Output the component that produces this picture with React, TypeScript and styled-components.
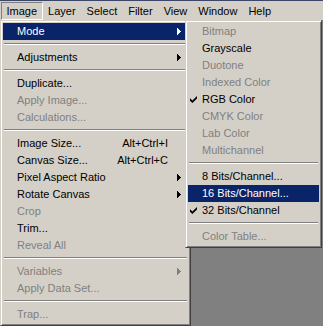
import React from "react";
import styled, { createGlobalStyle, css } from "styled-components";

const GlobalStyle = createGlobalStyle`
  html, body { margin: 0; padding: 0; background: #808080; }
  body { font-family: "Liberation Sans", Arial, sans-serif; font-size: 11px; }
`;

const Frame = styled.div`
  width: 323px;
  height: 326px;
  overflow: hidden;
  display: flex;
  flex-direction: column;
  background: #808080;
`;

const MenuBar = styled.div`
  box-sizing: border-box;
  height: 21px;
  border-top: 1px solid #3c4668;
  background: #d4d0c8;
  display: flex;
  align-items: center;
  padding-left: 1px;
`;

const BarItem = styled.div<{ $pressed?: boolean }>`
  box-sizing: border-box;
  height: 18px;
  line-height: 16px;
  padding: 0 4.5px;
  border: 1px solid transparent;
  color: #000;
  white-space: nowrap;
  ${(p) =>
    p.$pressed &&
    css`
      border-color: #808080 #ffffff #ffffff #808080;
    `}
`;

const Workspace = styled.div`
  position: relative;
  flex: 1;
  display: flex;
  align-items: flex-start;
`;

const Menu = styled.div<{ $width: number }>`
  box-sizing: border-box;
  width: ${(p) => p.$width}px;
  background: #d4d0c8;
  border: 1px solid;
  border-color: #d4d0c8 #404040 #404040 #d4d0c8;
  box-shadow: inset 1px 1px 0 #ffffff, inset -1px -1px 0 #808080;
  padding: 2px;
  display: flex;
  flex-direction: column;
`;

const SubMenu = styled(Menu)`
  position: absolute;
  left: 185px;
  top: 0;
`;

const Row = styled.div<{ $active?: boolean; $disabled?: boolean }>`
  display: flex;
  align-items: center;
  height: 17px;
  line-height: 17px;
  white-space: nowrap;
  color: ${(p) => (p.$active ? "#ffffff" : p.$disabled ? "#808080" : "#000000")};
  background: ${(p) => (p.$active ? "#0a246a" : "transparent")};
`;

const CheckCell = styled.div`
  width: 14px;
  height: 17px;
  display: flex;
  align-items: center;
  padding-left: 2px;
  box-sizing: border-box;
`;

const Label = styled.span`
  flex: 1;
`;

const Shortcut = styled.span`
  text-align: right;
`;

const ArrowCell = styled.div`
  width: 20px;
  height: 17px;
  display: flex;
  align-items: center;
  padding-left: 9px;
  box-sizing: border-box;
`;

const Separator = styled.div`
  box-sizing: border-box;
  height: 9px;
  display: flex;
  align-items: flex-start;
  padding: 3px 1px 0;
  &::before {
    content: "";
    flex: 1;
    border-top: 1px solid #808080;
    border-bottom: 1px solid #ffffff;
  }
`;

const Arrow = ({ color }: { color: string }) => (
  <svg width="4" height="7" viewBox="0 0 4 7" shapeRendering="crispEdges">
    <polygon points="0,0 4,3.5 0,7" fill={color} />
  </svg>
);

const Check = ({ color }: { color: string }) => (
  <svg width="7" height="7" viewBox="0 0 7 7">
    <polygon points="0,2.2 2.4,4.6 7,0 7,2.6 2.4,7 0,4.8" fill={color} />
  </svg>
);

type Item =
  | { sep: true }
  | {
      sep?: false;
      label: string;
      shortcut?: string;
      sub?: boolean;
      disabled?: boolean;
      active?: boolean;
      checked?: boolean;
    };

const mainItems: Item[] = [
  { label: "Mode", sub: true, active: true },
  { sep: true },
  { label: "Adjustments", sub: true },
  { sep: true },
  { label: "Duplicate..." },
  { label: "Apply Image...", disabled: true },
  { label: "Calculations...", disabled: true },
  { sep: true },
  { label: "Image Size...", shortcut: "Alt+Ctrl+I" },
  { label: "Canvas Size...", shortcut: "Alt+Ctrl+C" },
  { label: "Pixel Aspect Ratio", sub: true },
  { label: "Rotate Canvas", sub: true },
  { label: "Crop", disabled: true },
  { label: "Trim..." },
  { label: "Reveal All", disabled: true },
  { sep: true },
  { label: "Variables", sub: true, disabled: true },
  { label: "Apply Data Set...", disabled: true },
  { sep: true },
  { label: "Trap...", disabled: true },
];

const modeItems: Item[] = [
  { label: "Bitmap", disabled: true },
  { label: "Grayscale" },
  { label: "Duotone", disabled: true },
  { label: "Indexed Color", disabled: true },
  { label: "RGB Color", checked: true },
  { label: "CMYK Color", disabled: true },
  { label: "Lab Color", disabled: true },
  { label: "Multichannel", disabled: true },
  { sep: true },
  { label: "8 Bits/Channel..." },
  { label: "16 Bits/Channel...", active: true },
  { label: "32 Bits/Channel", checked: true },
  { sep: true },
  { label: "Color Table...", disabled: true },
];

const renderItems = (items: Item[]) =>
  items.map((it, i) => {
    if (it.sep) return <Separator key={i} />;
    const color = it.active ? "#ffffff" : it.disabled ? "#808080" : "#000000";
    return (
      <Row key={i} $active={it.active} $disabled={it.disabled}>
        <CheckCell>{it.checked && <Check color={color} />}</CheckCell>
        <Label>{it.label}</Label>
        {it.shortcut && <Shortcut>{it.shortcut}</Shortcut>}
        <ArrowCell>{it.sub && <Arrow color={color} />}</ArrowCell>
      </Row>
    );
  });

const barItems = ["Image", "Layer", "Select", "Filter", "View", "Window", "Help"];

export default function App() {
  return (
    <>
      <GlobalStyle />
      <Frame>
        <MenuBar>
          {barItems.map((b, i) => (
            <BarItem key={b} $pressed={i === 0}>
              {b}
            </BarItem>
          ))}
        </MenuBar>
        <Workspace>
          <Menu $width={191}>{renderItems(mainItems)}</Menu>
          <SubMenu $width={137}>{renderItems(modeItems)}</SubMenu>
        </Workspace>
      </Frame>
    </>
  );
}
